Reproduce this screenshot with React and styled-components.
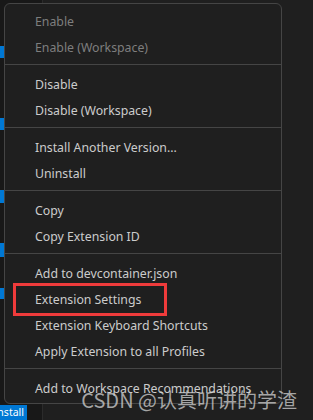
import React from "react";
import styled, { createGlobalStyle } from "styled-components";

const GlobalStyle = createGlobalStyle`
  html, body {
    margin: 0;
    padding: 0;
    background: #1f1f1f;
  }
  * {
    box-sizing: border-box;
  }
`;

const groups = [
  [
    { label: "Enable", disabled: true },
    { label: "Enable (Workspace)", disabled: true },
  ],
  [{ label: "Disable" }, { label: "Disable (Workspace)" }],
  [{ label: "Install Another Version..." }, { label: "Uninstall" }],
  [{ label: "Copy" }, { label: "Copy Extension ID" }],
  [
    { label: "Add to devcontainer.json" },
    { label: "Extension Settings", marked: true },
    { label: "Extension Keyboard Shortcuts" },
    { label: "Apply Extension to all Profiles" },
  ],
  [{ label: "Add to Workspace Recommendations" }],
];

// blue install buttons peeking out of the list behind the menu
const badges = [
  { gap: 46, h: 12, w: 4 },
  { gap: 60, h: 12, w: 4 },
  { gap: 60, h: 13, w: 4 },
  { gap: 40, h: 14, w: 4 },
  { gap: 31, h: 11, w: 4 },
];

function App() {
  return (
    <>
      <GlobalStyle />
      <Page>
        <Sidebar>
          <List>
            {badges.map((b, i) => (
              <Badge key={i} $gap={b.gap} $h={b.h} $w={b.w} />
            ))}
          </List>
          <InstallSlot>
            <InstallButton>Install</InstallButton>
          </InstallSlot>
        </Sidebar>
        <Editor />

        <Menu>
          {groups.map((group, gi) => (
            <React.Fragment key={gi}>
              {gi > 0 && <Separator />}
              {group.map((item) => (
                <Item key={item.label} $disabled={item.disabled}>
                  {item.label}
                  {item.marked && <Highlight />}
                </Item>
              ))}
            </React.Fragment>
          ))}
        </Menu>

        <Watermark>CSDN @认真听讲的学渣</Watermark>
      </Page>
    </>
  );
}

export default App;

const Page = styled.div`
  position: relative;
  width: 313px;
  height: 420px;
  overflow: hidden;
  display: flex;
  font-family: "Noto Sans", "Segoe UI", sans-serif;
`;

const Sidebar = styled.div`
  width: 43px;
  height: 100%;
  background: #181818;
  border-right: 1px solid #2b2b2b;
  display: flex;
  flex-direction: column;
  justify-content: space-between;
`;

const List = styled.div`
  display: flex;
  flex-direction: column;
`;

const Badge = styled.div`
  margin-top: ${(p) => p.$gap}px;
  width: ${(p) => p.$w}px;
  height: ${(p) => p.$h}px;
  background: #0078d4;
`;

const InstallSlot = styled.div`
  width: 27px;
  height: 15px;
  overflow: hidden;
  display: flex;
  justify-content: flex-end;
`;

const InstallButton = styled.div`
  flex-shrink: 0;
  background: #0078d4;
  color: #ffffff;
  font-family: "Noto Sans", sans-serif;
  font-size: 10.5px;
  line-height: 15px;
  padding: 0 3px 0 4px;
  white-space: nowrap;
`;

const Editor = styled.div`
  flex: 1;
  background: #1f1f1f;
`;

const Menu = styled.div`
  position: absolute;
  left: 4px;
  top: 3px;
  width: 278px;
  padding: 4px 0 2px;
  background: #1f1f1f;
  border: 1px solid #454545;
  border-radius: 6px;
  display: flex;
  flex-direction: column;
`;

const Item = styled.div`
  position: relative;
  height: 26px;
  padding: 2px 0 0 30px;
  line-height: 24px;
  font-size: 12.3px;
  color: ${(p) => (p.$disabled ? "#7e7e7e" : "#cccccc")};
  white-space: nowrap;
`;

const Highlight = styled.span`
  position: absolute;
  left: 8px;
  top: -3px;
  width: 154px;
  height: 33px;
  border: 3px solid #ef3b3b;
`;

const Separator = styled.div`
  height: 1px;
  margin: 4px 0 6px;
  background: #454545;
`;

const Watermark = styled.div`
  position: absolute;
  right: 16px;
  bottom: 8px;
  font-family: "Noto Sans CJK SC", sans-serif;
  font-size: 20px;
  line-height: 24px;
  color: rgba(210, 210, 210, 0.75);
  white-space: nowrap;
`;
